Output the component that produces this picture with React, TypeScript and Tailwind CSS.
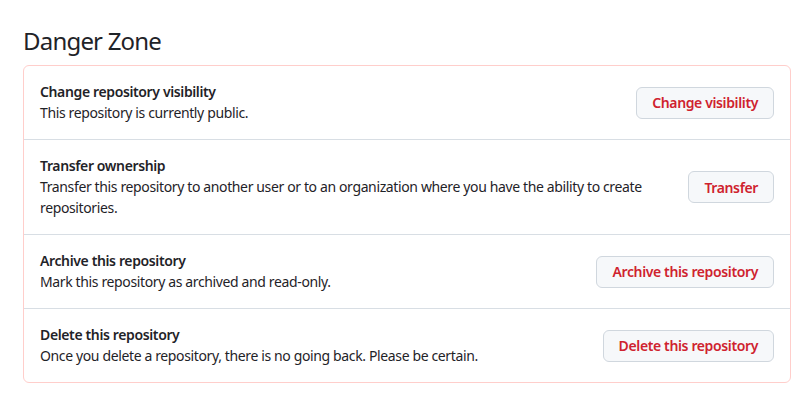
import React from "react";

const rows = [
  { title: "Change repository visibility", desc: "This repository is currently public.", btn: "Change visibility" },
  {
    title: "Transfer ownership",
    desc: "Transfer this repository to another user or to an organization where you have the ability to create repositories.",
    btn: "Transfer",
  },
  { title: "Archive this repository", desc: "Mark this repository as archived and read-only.", btn: "Archive this repository" },
  {
    title: "Delete this repository",
    desc: "Once you delete a repository, there is no going back. Please be certain.",
    btn: "Delete this repository",
  },
];

export default function App() {
  return (
    <div
      className="min-h-[398px] w-[807px] bg-white pl-[23px] pr-[16px] pt-[23px] text-[#1f2328]"
      style={{ fontFamily: '"Noto Sans", "Open Sans", sans-serif' }}
    >
      <h2 className="mb-[6px] text-[24px] leading-[36px] font-normal tracking-[-0.8px]">Danger Zone</h2>
      <div className="rounded-[6px] border border-[#ffcecb]">
        {rows.map((r, i) => (
          <div
            key={r.title}
            className={`flex items-center gap-4 p-4 ${i > 0 ? "border-t border-[#d8dee4]" : ""}`}
          >
            <div className="flex-1 min-w-0 tracking-[-0.37px]">
              <div className="text-[14px] leading-[20px] font-semibold">{r.title}</div>
              <div className="text-[14px] leading-[21px]">{r.desc}</div>
            </div>
            <button className="h-[32px] shrink-0 rounded-[6px] border border-[#d0d7de] bg-[#f6f8fa] px-[15px] text-[14px] font-semibold tracking-[-0.37px] text-[#cf222e]">
              {r.btn}
            </button>
          </div>
        ))}
      </div>
    </div>
  );
}
